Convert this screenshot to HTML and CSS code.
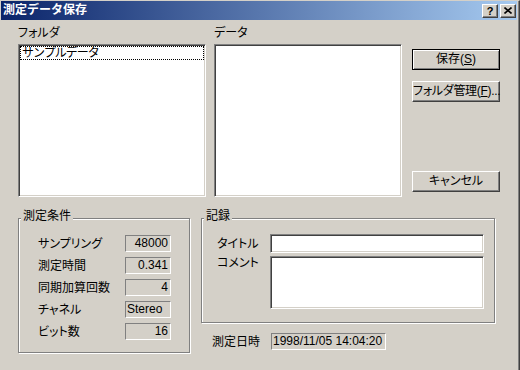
FILE: index.html
```html
<!DOCTYPE html>
<html lang="ja">
<head>
  <meta charset="UTF-8">
  <title>測定データ保存</title>
  <link rel="stylesheet" href="styles.css">
</head>
<body>
  <div class="window">
    <!-- タイトルバー -->
    <div class="titlebar">
      <span class="title">測定データ保存</span>
      <div class="caption">
        <span class="cap-btn help">?</span>
        <span class="cap-btn close">
          <svg width="8" height="7" viewBox="0 0 8 7"><path d="M0.5 0.5 L7.5 6.5 M7.5 0.5 L0.5 6.5" stroke="#000" stroke-width="1.6" fill="none"/></svg>
        </span>
      </div>
    </div>

    <div class="client">
      <!-- フォルダ / データ 一覧とボタン -->
      <div class="top">
        <div class="pane">
          <div class="label">フォルダ</div>
          <div class="listbox">
            <div class="item focused">サンプルデータ</div>
          </div>
        </div>
        <div class="pane">
          <div class="label">データ</div>
          <div class="listbox"></div>
        </div>
        <div class="actions">
          <button class="btn default">保存(<u>S</u>)</button>
          <button class="btn manage">フォルダ管理(<u>F</u>)...</button>
          <button class="btn cancel">キャンセル</button>
        </div>
      </div>

      <div class="bottom">
        <!-- 測定条件 -->
        <fieldset class="group cond">
          <legend>測定条件</legend>
          <div class="cond-grid">
            <span>サンプリング</span><span class="field">48000</span>
            <span>測定時間</span><span class="field">0.341</span>
            <span>同期加算回数</span><span class="field">4</span>
            <span>チャネル</span><span class="field left">Stereo</span>
            <span>ビット数</span><span class="field">16</span>
          </div>
        </fieldset>

        <div class="right">
          <!-- 記録 -->
          <fieldset class="group record">
            <legend>記録</legend>
            <div class="record-grid">
              <span class="rlabel">タイトル</span>
              <div class="edit"></div>
              <span class="rlabel top-label">コメント</span>
              <div class="edit"></div>
            </div>
          </fieldset>
          <div class="date-row">
            <span class="dlabel">測定日時</span>
            <span class="field left date">1998/11/05 14:04:20</span>
          </div>
        </div>
      </div>
    </div>
  </div>
</body>
</html>
```

FILE: styles.css
```css
/* Windows 2000 風ダイアログ */
* {
  box-sizing: border-box;
}
body {
  margin: 0;
  background: #d4d0c8;
  color: #000;
  font-family: "Liberation Sans", "Noto Sans CJK JP", sans-serif;
  font-size: 12px;
  line-height: 14px;
  font-feature-settings: "palt";
}
.window {
  width: 520px;
  height: 370px;
  overflow: hidden;
  background: #d4d0c8;
  border-top: 1px solid #d4d0c8;
  border-left: 1px solid #d4d0c8;
  border-right: 1px solid #404040;
  box-shadow: inset -1px 0 #808080;
}

/* タイトルバー */
.titlebar {
  height: 19px;
  margin-right: 2px;
  padding: 0 1px 0 2px;
  display: flex;
  align-items: center;
  justify-content: space-between;
  background: linear-gradient(to right, #0a246a, #a6caf0);
}
.title {
  color: #fff;
  font-weight: bold;
  font-feature-settings: normal;
  line-height: 19px;
}
.caption {
  display: flex;
  gap: 2px;
}
.cap-btn {
  width: 16px;
  height: 14px;
  display: flex;
  align-items: center;
  justify-content: center;
  background: #d4d0c8;
  border: 1px solid;
  border-color: #fff #404040 #404040 #fff;
  box-shadow: inset -1px -1px #808080;
}
.help {
  font-weight: bold;
  font-size: 11px;
  line-height: 12px;
}

/* クライアント領域 */
.client {
  padding: 6px 0 0 17px;
}
.top {
  display: flex;
  height: 171px;
}
.pane {
  width: 188px;
  margin-right: 8px;
  display: flex;
  flex-direction: column;
}
.pane + .pane {
  margin-right: 10px;
}
.label {
  height: 14px;
  margin-bottom: 4px;
}
.listbox {
  height: 153px;
  background: #fff;
  border: 1px solid;
  border-color: #808080 #fff #fff #808080;
  box-shadow: inset 1px 1px #404040, inset -1px -1px #d4d0c8;
  padding: 1px;
}
.item {
  height: 14px;
  line-height: 12px;
  padding-left: 1px;
  font-feature-settings: normal;
  letter-spacing: -1px;
}
.item.focused {
  border: 1px dotted #000;
}

/* ボタン */
.actions {
  width: 88px;
  display: flex;
  flex-direction: column;
  padding: 23px 0 5px;
}
.btn {
  width: 88px;
  height: 21px;
  padding: 0;
  font: inherit;
  line-height: 17px;
  white-space: nowrap;
  color: #000;
  background: #d4d0c8;
  border: 1px solid;
  border-color: #fff #404040 #404040 #fff;
  box-shadow: inset -1px -1px #808080;
}
.btn.default {
  border-color: #000;
  box-shadow: inset 1px 1px #fff, inset -1px -1px #808080;
}
.btn.manage {
  margin-top: 11px;
  letter-spacing: -0.3px;
}
.btn.cancel {
  margin-top: auto;
}

/* グループボックス */
.bottom {
  display: flex;
  align-items: flex-start;
  margin-top: 13px;
}
.group {
  margin: 0;
  padding: 0;
  min-width: 0;
  border: 1px solid #808080;
  box-shadow: inset 1px 1px #fff, 1px 1px #fff;
}
.group legend {
  margin-left: 2px;
  padding: 0 2px 4px;
  line-height: 12px;
  background: #d4d0c8;
}
.cond {
  width: 172px;
}
.cond-grid {
  display: grid;
  grid-template-columns: 87px 46px;
  grid-auto-rows: 17px;
  row-gap: 5px;
  align-items: center;
  padding: 9px 0 12px 19px;
}
.field {
  height: 17px;
  line-height: 15px;
  padding: 0 2px;
  text-align: right;
  border: 1px solid;
  border-color: #808080 #fff #fff #808080;
}
.field.left {
  text-align: left;
  padding: 0 1px;
}

.right {
  margin-left: 11px;
}
.record {
  width: 294px;
}
.record-grid {
  display: grid;
  grid-template-columns: 53px 214px;
  grid-template-rows: 19px 53px;
  row-gap: 3px;
  align-items: center;
  padding: 8px 10px 13px 15px;
}
.top-label {
  align-self: start;
}
.edit {
  height: 100%;
  background: #fff;
  border: 1px solid;
  border-color: #808080 #fff #fff #808080;
  box-shadow: inset 1px 1px #404040, inset -1px -1px #d4d0c8;
}
.date-row {
  display: flex;
  align-items: center;
  margin-top: 10px;
  padding-left: 11px;
}
.dlabel {
  width: 59px;
}
.date {
  width: 115px;
}
```
